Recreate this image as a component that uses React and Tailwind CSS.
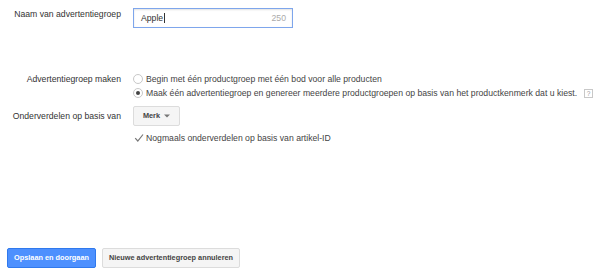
export default function App() {
  return (
    <div className="w-[607px] h-[275px] bg-white font-['Liberation_Sans',Arial,sans-serif] text-[8.67px] text-[#444] flex flex-col overflow-hidden">
      {/* Row 1 */}
      <div className="flex mt-[8px]">
        <div className="w-[121px] text-right pt-[1px] leading-[10px] text-[#333]">Naam van advertentiegroep</div>
        <div className="ml-[12px] w-[160px] h-[20px] border border-[#7ea6ec] shadow-[inset_0_1px_2px_rgba(0,0,0,0.12)] flex items-center pl-[7px] pr-[6px]">
          <span className="text-[#333]">Apple</span>
          <span className="w-px h-[10px] bg-[#333] ml-[1px]" />
          <span className="ml-auto text-[#aaa]">250</span>
        </div>
      </div>

      {/* Row 2 */}
      <div className="flex mt-[44px]">
        <div className="w-[121px] text-right leading-[14px] text-[#333]">Advertentiegroep maken</div>
        <div className="ml-[12px] flex flex-col">
          <div className="flex items-center h-[14px]">
            <span className="w-[10px] h-[10px] rounded-full border border-[#c8c8c8] bg-white shrink-0" />
            <span className="ml-[3px]">Begin met één productgroep met één bod voor alle producten</span>
          </div>
          <div className="flex items-center h-[14px]">
            <span className="w-[10px] h-[10px] rounded-full border border-[#c8c8c8] bg-white shrink-0 flex items-center justify-center">
              <span className="w-[4px] h-[4px] rounded-full bg-[#444]" />
            </span>
            <span className="ml-[3px]">Maak één advertentiegroep en genereer meerdere productgroepen op basis van het productkenmerk dat u kiest.</span>
            <span className="ml-[7px] w-[9px] h-[9px] border border-[#c8c8c8] text-[6.5px] leading-[7px] text-[#999] flex items-center justify-center">?</span>
          </div>
        </div>
      </div>

      {/* Row 3 */}
      <div className="flex mt-[6px] items-center">
        <div className="w-[121px] text-right text-[#333]">Onderverdelen op basis van</div>
        <div className="ml-[12px] w-[47px] h-[20px] border border-[#dcdcdc] bg-[#f5f5f5] rounded-[2px] flex items-center justify-center font-bold text-[7.33px] text-[#444]">
          <span>Merk</span>
          <svg width="6" height="4" viewBox="0 0 6 4" className="ml-[4px]">
            <path d="M0 0.5 L6 0.5 L3 3.5 Z" fill="#777" />
          </svg>
        </div>
      </div>

      {/* Row 4 */}
      <div className="flex mt-[5px] items-center h-[14px]">
        <div className="w-[121px]" />
        <div className="ml-[13px] flex items-center">
          <svg width="10" height="10" viewBox="0 0 10 10">
            <path d="M1.2 5.2 L3.8 8 L9 1.5" fill="none" stroke="#777" strokeWidth="1.2" />
          </svg>
          <span className="ml-[2px]">Nogmaals onderverdelen op basis van artikel-ID</span>
        </div>
      </div>

      {/* Buttons */}
      <div className="flex mt-[103px] ml-[7px] gap-[6px]">
        <button className="h-[20px] w-[89px] whitespace-nowrap bg-[#4d90fe] border border-[#3079ed] rounded-[2px] text-white font-bold text-[7.33px] flex items-center justify-center">
          Opslaan en doorgaan
        </button>
        <button className="h-[20px] w-[138px] whitespace-nowrap bg-[#f5f5f5] border border-[#dcdcdc] rounded-[2px] text-[#444] font-bold text-[7.33px] flex items-center justify-center">
          Nieuwe advertentiegroep annuleren
        </button>
      </div>
    </div>
  );
}
